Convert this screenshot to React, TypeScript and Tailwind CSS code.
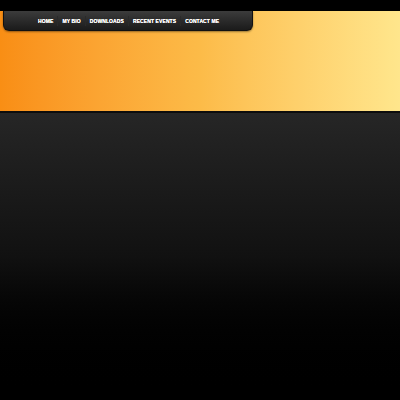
export default function App() {
  const items = ["HOME", "MY BIO", "DOWNLOADS", "RECENT EVENTS", "CONTACT ME"];
  return (
    <div className="w-[400px] h-[400px] flex flex-col bg-black overflow-hidden">
      <div className="h-[11px] bg-black shrink-0" />
      <div className="relative h-[100px] shrink-0 bg-gradient-to-r from-[#f98e14] via-[#fcbb48] to-[#ffe68c]">
        <nav className="absolute left-[3px] top-0 w-[250px] h-[20px] rounded-b-[6px] bg-gradient-to-b from-[#3c3c3c] to-[#1b1b1b] border border-t-0 border-[#111] shadow-[0_1px_2px_rgba(0,0,0,0.4)] flex items-center pl-[34px] pt-px">
          {items.map((t, i) => (
            <div key={t} className="flex items-center">
              {i > 0 && <span className="w-px h-[10px] bg-[#2a2a2a] mx-[4px]" />}
              <span className="text-white font-bold text-[5px] leading-none whitespace-nowrap tracking-[0.1px] font-['Liberation_Sans',Arial,sans-serif] [text-shadow:0_0_0.4px_#fff]">
                {t}
              </span>
            </div>
          ))}
        </nav>
      </div>
      <div className="h-[2px] bg-[#0d0d0d] shrink-0" />
      <div className="flex-1 bg-gradient-to-b from-[#262626] via-[#111111] to-black" />
    </div>
  );
}
